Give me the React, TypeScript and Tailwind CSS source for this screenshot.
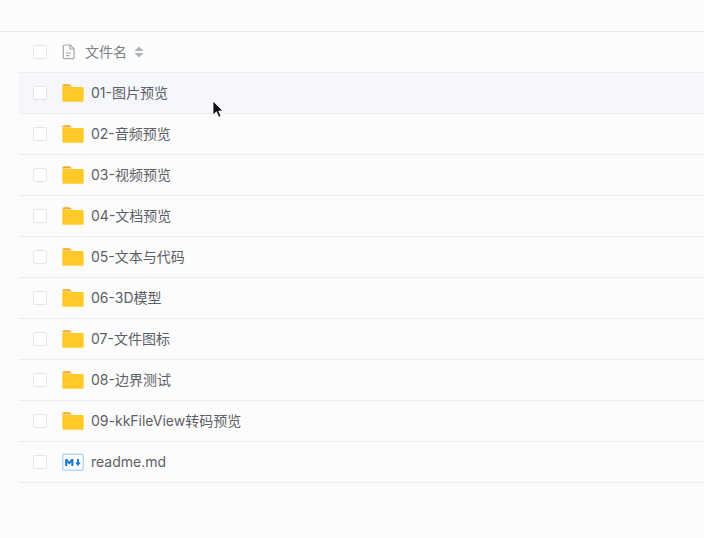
import React from "react";

const names = ["01-图片预览","02-音频预览","03-视频预览","04-文档预览","05-文本与代码","06-3D模型","07-文件图标","08-边界测试","09-kkFileView转码预览"];
const font = { fontFamily: '"Inter","Liberation Sans","Noto Sans CJK SC",sans-serif' };

function Check() {
  return <span className="block w-[14px] h-[14px] rounded-[2px] border border-[#e4e6ea] bg-white shrink-0" />;
}
function Folder() {
  return (
    <svg width="22" height="18" viewBox="0 0 22 18" className="shrink-0">
      <path d="M.3 2C.3 1 1 .3 2 .3h5.2c.7 0 1.2.3 1.7.9L10 2.6H.3z" fill="#f9a825" />
      <path d="M.3 3h20c.8 0 1.4.6 1.4 1.4v11.8c0 .9-.7 1.6-1.6 1.6H1.9c-.9 0-1.6-.7-1.6-1.6z" fill="#ffca28" />
    </svg>
  );
}
function Md() {
  return (
    <svg width="22" height="18" viewBox="0 0 22 18" className="shrink-0">
      <rect x=".75" y="1.25" width="20.5" height="16" rx="1.5" fill="#fff" stroke="#b5d6f7" strokeWidth="1.5" />
      <path d="M3.2 13V6h2l2.1 2.8L9.4 6h2v7H9.3V9.2L7.3 11.7l-2-2.5V13z" fill="#1976d2" />
      <path d="M15 6h1.9v3.4h2L16 13l-3-3.6h2z" fill="#1976d2" />
    </svg>
  );
}
function Row({ name, icon, active }: { name: string; icon: React.ReactNode; active?: boolean }) {
  return (
    <div className={`h-[41px] flex items-center border-b border-[#ebedf0] pl-[14px] ${active ? "bg-[#f5f7fa]" : ""}`}>
      <Check />
      <div className="w-[15px] shrink-0" />
      {icon}
      <span className="ml-[7px] pb-[2px] text-[14px] text-[#5c5f66] whitespace-nowrap">{name}</span>
    </div>
  );
}

export default function App() {
  return (
    <div className="relative w-[704px] h-[538px] overflow-hidden bg-[#fcfcfd]" style={font}>
      <div className="h-[32px] border-b border-[#e6e7ea]" />
      <div className="ml-[19px]">
        <div className="h-[41px] flex items-center border-b border-[#ebedf0] pl-[14px]">
          <Check />
          <svg width="14" height="16" viewBox="0 0 14 16" fill="none" stroke="#a3a6ad" strokeWidth="1.2" className="ml-[15px] shrink-0">
            <path d="M2.5 1h5.8l3.7 3.7v8.8a1.2 1.2 0 0 1-1.2 1.2H2.5a1.2 1.2 0 0 1-1.2-1.2V2.2A1.2 1.2 0 0 1 2.5 1z" />
            <path d="M8 1.2v3.8h3.8M4 9h5M4 11.6h3.5" />
          </svg>
          <span className="ml-[9px] pb-[2px] text-[14px] text-[#7d8087] whitespace-nowrap">文件名</span>
          <svg width="10" height="12" viewBox="0 0 10 12" className="ml-[7px] shrink-0">
            <path d="M5 .5l4.6 4.6H.4z M5 11.5L.4 6.9h9.2z" fill="#b0b3ba" />
          </svg>
        </div>
        {names.map((n, i) => <Row key={n} name={n} icon={<Folder />} active={i === 0} />)}
        <Row name="readme.md" icon={<Md />} />
      </div>
      <svg width="13" height="19" viewBox="0 0 13 19" className="absolute left-[212px] top-[100px]">
        <path d="M1 1v14l3.4-3.2 2.3 5.4 2.3-1-2.3-5.2H11z" fill="#111" stroke="#fff" strokeWidth=".8" />
      </svg>
    </div>
  );
}
